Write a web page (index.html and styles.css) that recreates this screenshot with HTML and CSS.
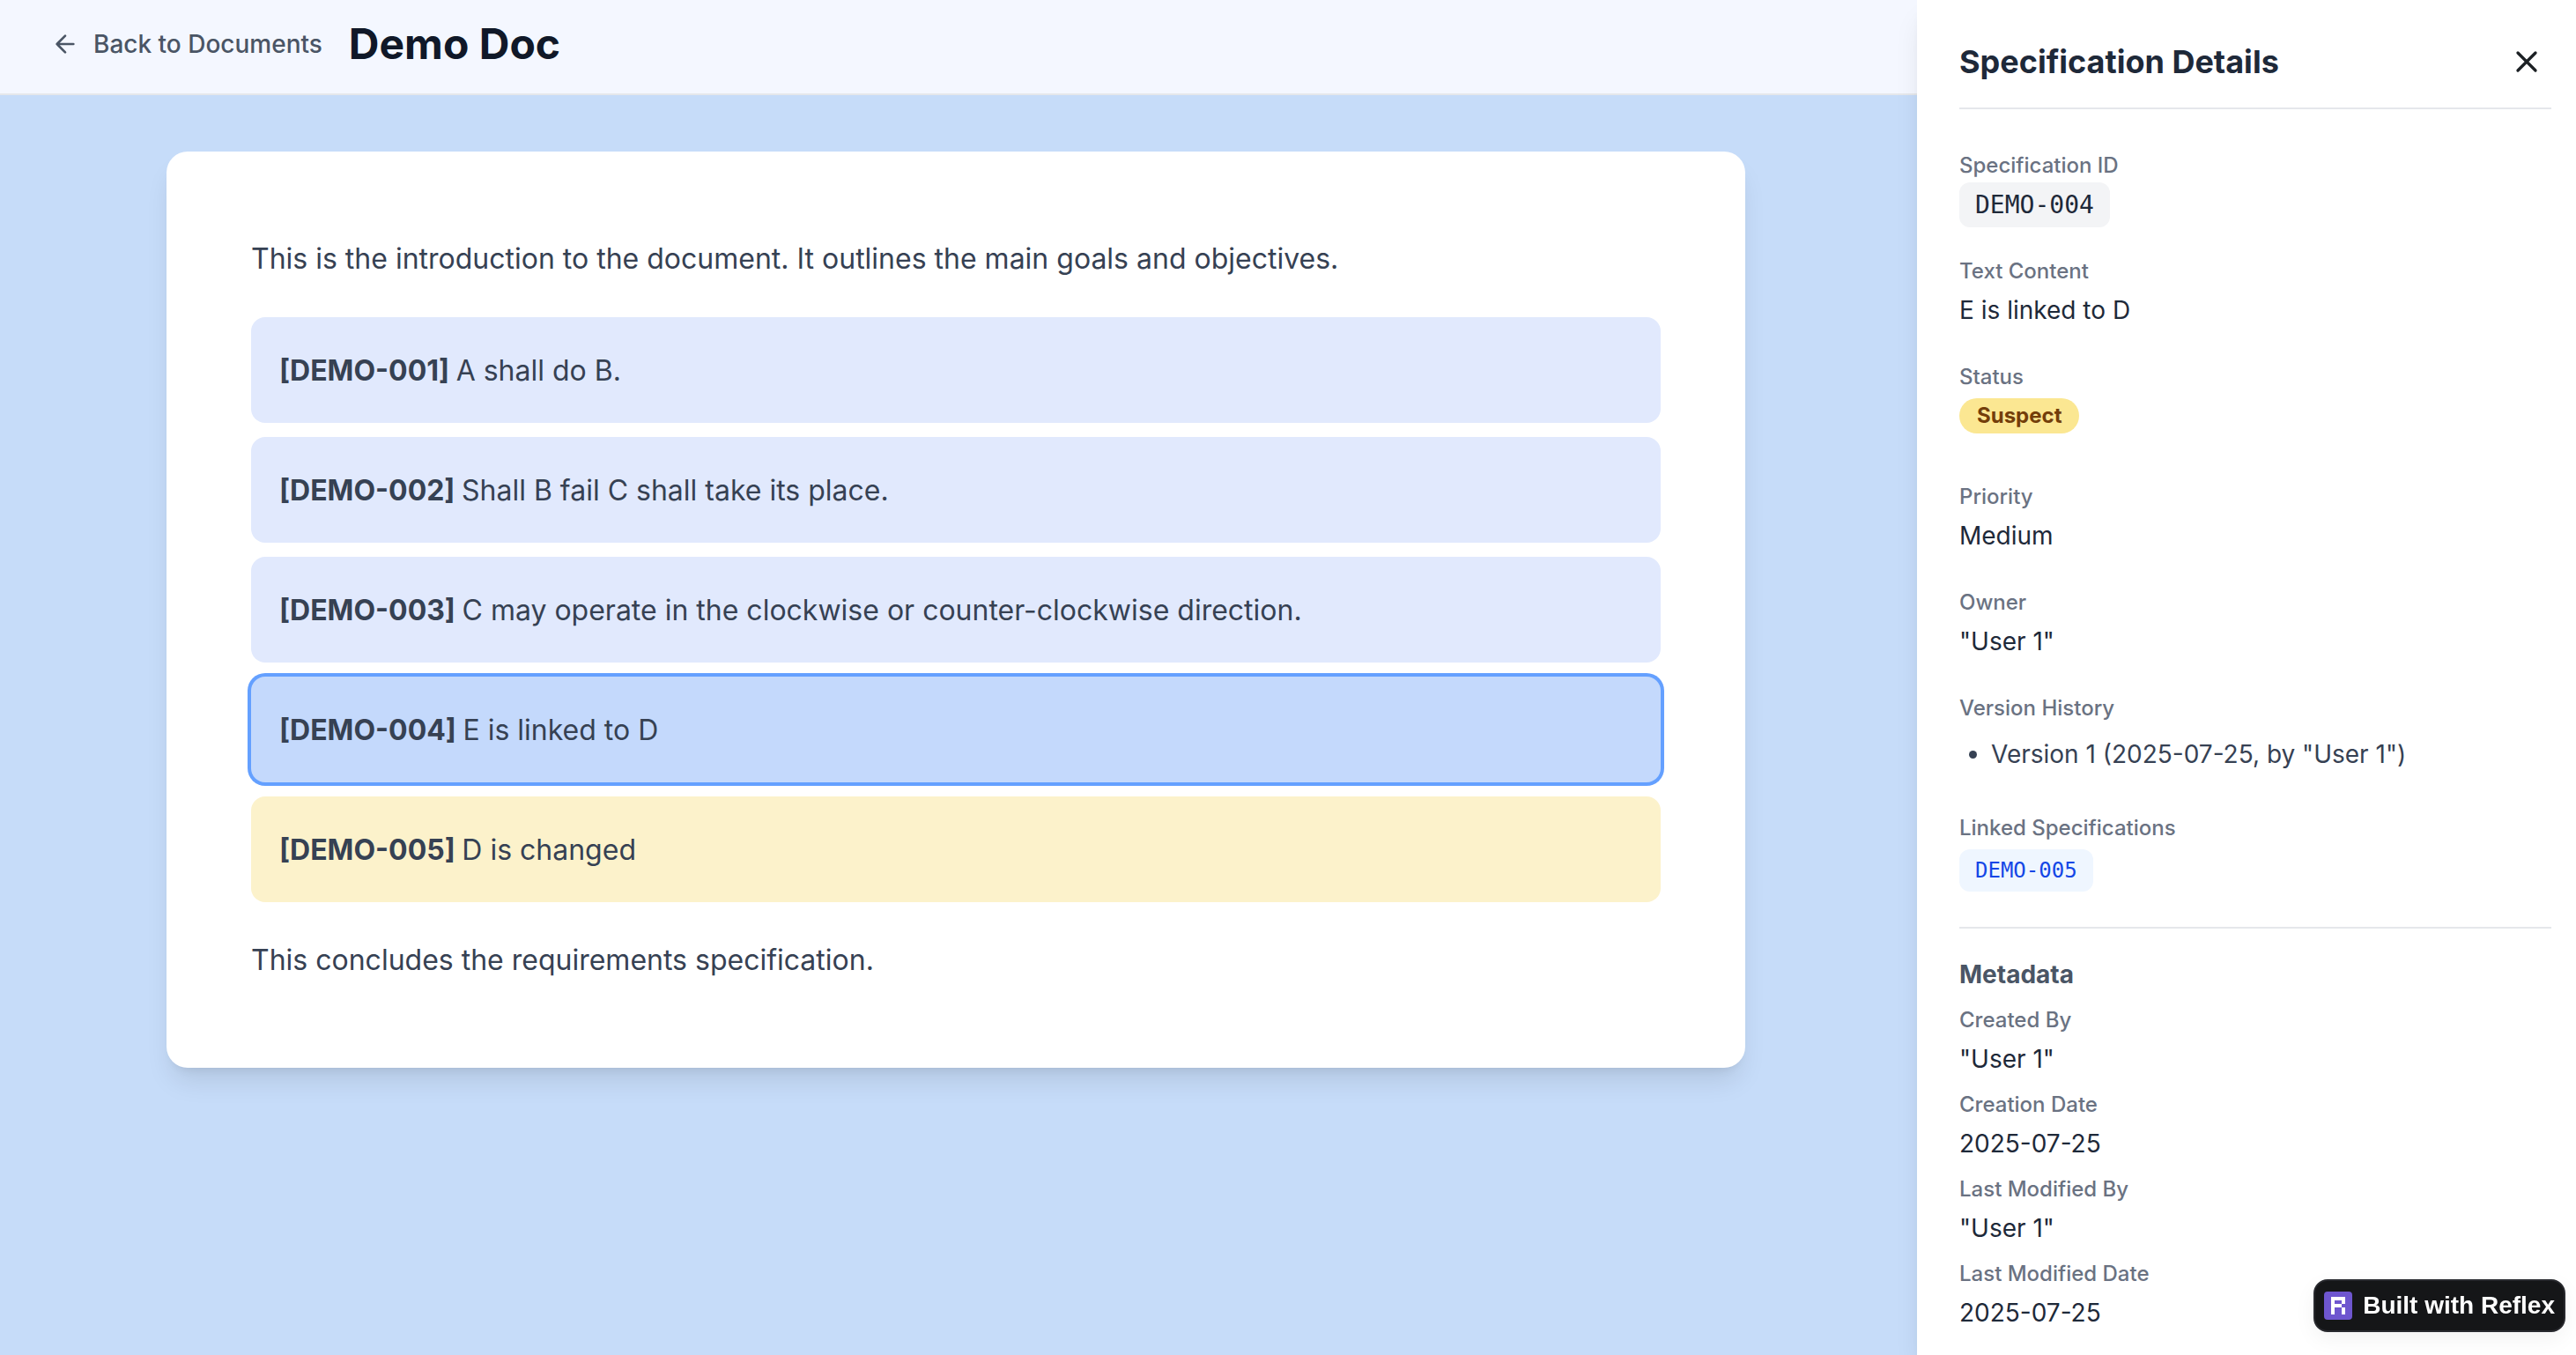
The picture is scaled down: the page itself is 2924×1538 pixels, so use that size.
FILE: index.html
```html
<!DOCTYPE html>
<html lang="en">
<head>
  <meta charset="utf-8">
  <title>Demo Doc</title>
  <link rel="stylesheet" href="styles.css">
</head>
<body class="page">
  <div class="workspace">
    <header class="topbar">
      <a class="back-link" href="#">
        <svg class="back-icon" viewBox="0 0 24 24" aria-hidden="true"><path d="m12 19-7-7 7-7M19 12H5"/></svg>
        Back to Documents
      </a>
      <h1 class="doc-title">Demo Doc</h1>
    </header>
    <main class="canvas">
      <article class="document">
        <p class="prose">This is the introduction to the document. It outlines the main goals and objectives.</p>
        <div class="specs">
          <p class="spec"><strong>[DEMO-001] </strong>A shall do B.</p>
          <p class="spec"><strong>[DEMO-002] </strong>Shall B fail C shall take its place.</p>
          <p class="spec"><strong>[DEMO-003] </strong>C may operate in the clockwise or counter-clockwise direction.</p>
          <p class="spec spec-selected"><strong>[DEMO-004] </strong>E is linked to D</p>
          <p class="spec spec-suspect"><strong>[DEMO-005] </strong>D is changed</p>
        </div>
        <p class="prose">This concludes the requirements specification.</p>
      </article>
    </main>
  </div>

  <aside class="panel">
    <div class="panel-head">
      <h2 class="panel-title">Specification Details</h2>
      <button class="close" type="button" aria-label="Close">
        <svg class="close-icon" viewBox="0 0 24 24" aria-hidden="true"><path d="M18 6 6 18M6 6l12 12"/></svg>
      </button>
    </div>
    <dl class="details">
      <div class="field">
        <dt class="label">Specification ID</dt>
        <dd class="value"><code class="code">DEMO-004</code></dd>
      </div>
      <div class="field">
        <dt class="label">Text Content</dt>
        <dd class="value">E is linked to D</dd>
      </div>
      <div class="field">
        <dt class="label">Status</dt>
        <dd class="value value-status"><span class="pill">Suspect</span></dd>
      </div>
      <div class="field">
        <dt class="label">Priority</dt>
        <dd class="value">Medium</dd>
      </div>
      <div class="field">
        <dt class="label">Owner</dt>
        <dd class="value">"User 1"</dd>
      </div>
      <div class="field">
        <dt class="label">Version History</dt>
        <dd class="value">
          <ul class="history">
            <li>Version 1 (2025-07-25, by "User 1")</li>
          </ul>
        </dd>
      </div>
      <div class="field">
        <dt class="label">Linked Specifications</dt>
        <dd class="value value-links"><a class="spec-link" href="#">DEMO-005</a></dd>
      </div>
    </dl>
    <section class="metadata">
      <h3 class="metadata-title">Metadata</h3>
      <dl class="metadata-list">
        <div class="field">
          <dt class="label">Created By</dt>
          <dd class="value">"User 1"</dd>
        </div>
        <div class="field">
          <dt class="label">Creation Date</dt>
          <dd class="value">2025-07-25</dd>
        </div>
        <div class="field">
          <dt class="label">Last Modified By</dt>
          <dd class="value">"User 1"</dd>
        </div>
        <div class="field">
          <dt class="label">Last Modified Date</dt>
          <dd class="value">2025-07-25</dd>
        </div>
      </dl>
    </section>
  </aside>

  <a class="reflex-badge" href="#">
    <svg class="reflex-logo" viewBox="0 0 32 32" aria-hidden="true">
      <rect width="32" height="32" rx="4" fill="#6e56cf"/>
      <path d="M8 6h16v8h-4v-4h-8v4h8v4h-8v8H8zM20 18h4v8h-4z" fill="#fff"/>
    </svg>
    Built with Reflex
  </a>
</body>
</html>
```
FILE: styles.css
```css
* {
  box-sizing: border-box;
  margin: 0;
  padding: 0;
}

.page {
  display: grid;
  grid-template-columns: minmax(0, 1fr) 748px;
  min-height: 100vh;
  background: #c6dcf9;
  color: #1e2939;
  font-family: Inter, "Liberation Sans", sans-serif;
  font-size: 28px;
  line-height: 48px;
}

/* Document side */
.topbar {
  display: flex;
  align-items: center;
  gap: 30px;
  padding: 20px 58px 26px;
  background: #f4f7ff;
  border-bottom: 2px solid #e5e7eb;
}

.back-link {
  display: flex;
  align-items: center;
  gap: 16px;
  color: #4a5565;
  font-weight: 500;
  text-decoration: none;
}

.back-icon,
.close-icon {
  fill: none;
  stroke: currentColor;
  stroke-width: 2;
  stroke-linecap: round;
  stroke-linejoin: round;
}

.back-icon {
  width: 32px;
  height: 32px;
}

.doc-title {
  color: #101828;
  font-size: 48px;
  font-weight: 700;
  line-height: 60px;
}

.canvas {
  padding: 64px 70px 64px 64px;
}

.document {
  display: flex;
  flex-direction: column;
  gap: 40px;
  max-width: 1792px;
  margin: 0 auto;
  padding: 96px;
  border-radius: 24px;
  background: #fff;
  box-shadow: 0 20px 30px -6px rgba(0, 0, 0, 0.1), 0 8px 12px -8px rgba(0, 0, 0, 0.1);
  color: #364153;
  font-size: 32px;
}

.prose {
  line-height: 52px;
}

.specs {
  display: flex;
  flex-direction: column;
  gap: 16px;
}

.spec {
  padding: 33px 32px 31px;
  border-radius: 16px;
  background: #e1e9fd;
  line-height: 56px;
}

.spec-selected {
  background: #c4d9fc;
  box-shadow: 0 0 0 4px #64a0ff;
}

.spec-suspect {
  background: #fcf2cb;
}

/* Details side */
.panel {
  padding: 42px 28px 24px 48px;
  background: #fff;
  box-shadow: 0 20px 30px -6px rgba(0, 0, 0, 0.1), 0 8px 12px -8px rgba(0, 0, 0, 0.1);
}

.panel-head {
  display: flex;
  align-items: center;
  justify-content: space-between;
  padding-bottom: 24px;
  border-bottom: 2px solid #e5e7eb;
}

.panel-title {
  font-size: 36px;
  font-weight: 700;
}

.close {
  display: flex;
  padding: 8px;
  border: 0;
  background: none;
  color: #1c2024;
}

.close-icon {
  width: 40px;
  height: 40px;
}

.details {
  display: flex;
  flex-direction: column;
  gap: 32px;
  padding: 44px 0 40px;
}

.label {
  color: #6a7282;
  font-size: 24px;
  font-weight: 500;
  line-height: 40px;
}

.code,
.spec-link {
  border-radius: 12px;
  font-family: "DejaVu Sans Mono", monospace;
}

.code {
  padding: 9px 18px;
  background: #f3f4f6;
  font-size: 28px;
  line-height: 1;
}

.value-status {
  display: flex;
  padding: 4px 0 20px;
}

.pill {
  padding: 0 20px;
  border-radius: 20px;
  background: #fbe792;
  color: #733e0a;
  font-size: 24px;
  font-weight: 700;
  line-height: 40px;
}

.history {
  padding: 8px 0 8px 36px;
  color: #364153;
}

.value-links {
  display: flex;
  padding-top: 4px;
}

.spec-link {
  padding: 0 18px;
  background: #eff6ff;
  color: #1447e6;
  font-size: 24px;
  text-decoration: none;
}

.metadata {
  padding-top: 28px;
  border-top: 2px solid #e5e7eb;
}

.metadata-title {
  margin-bottom: 8px;
  color: #4a5565;
  font-size: 28px;
  font-weight: 700;
}

.metadata-list {
  display: flex;
  flex-direction: column;
  gap: 8px;
}

/* Floating badge */
.reflex-badge {
  position: fixed;
  right: 12px;
  bottom: 26px;
  display: flex;
  align-items: center;
  gap: 12px;
  padding: 4px 10px;
  border: 2px solid #28292e;
  border-radius: 16px;
  background: #151618;
  box-shadow: 0 8px 24px rgba(0, 0, 0, 0.05);
  color: #fff;
  font-family: "Liberation Sans", Arial, sans-serif;
  font-weight: 700;
  text-decoration: none;
}

.reflex-logo {
  width: 32px;
  height: 32px;
}
```
